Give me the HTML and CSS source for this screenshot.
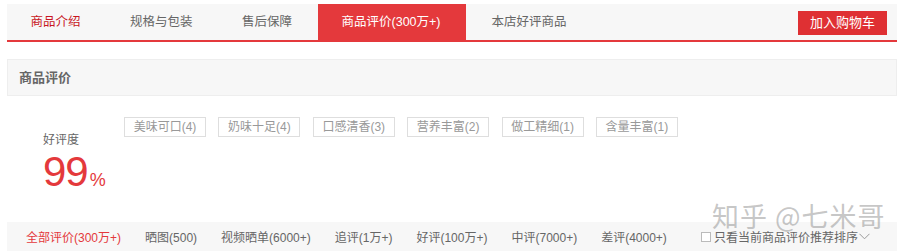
FILE: index.html
```html
<!DOCTYPE html>
<html lang="zh-CN">
<head>
<meta charset="utf-8">
<link rel="stylesheet" href="styles.css">
</head>
<body>
<div class="page">
  <div class="tabbar">
    <div class="tabs">
      <div class="tab tab-first">商品介绍</div>
      <div class="tab">规格与包装</div>
      <div class="tab">售后保障</div>
      <div class="tab tab-active">商品评价(300万+)</div>
      <div class="tab">本店好评商品</div>
    </div>
    <div class="cart-btn">加入购物车</div>
  </div>

  <div class="section-head">商品评价</div>

  <div class="summary">
    <div class="rate">
      <div class="rate-label">好评度</div>
      <div class="rate-value">99<span class="pct">%</span></div>
    </div>
    <div class="tags">
      <span class="tag">美味可口(4)</span>
      <span class="tag">奶味十足(4)</span>
      <span class="tag">口感清香(3)</span>
      <span class="tag">营养丰富(2)</span>
      <span class="tag">做工精细(1)</span>
      <span class="tag">含量丰富(1)</span>
    </div>
  </div>

  <div class="filter">
    <span class="f-item f-active">全部评价(300万+)</span>
    <span class="f-item">晒图(500)</span>
    <span class="f-item">视频晒单(6000+)</span>
    <span class="f-item">追评(1万+)</span>
    <span class="f-item">好评(100万+)</span>
    <span class="f-item">中评(7000+)</span>
    <span class="f-item">差评(4000+)</span>
    <span class="f-check"><span class="box"></span>只看当前商品评价<span class="sort">推荐排序<svg class="chev" width="11" height="7" viewBox="0 0 11 7"><path d="M0.5 0.8 L5.5 5.8 L10.5 0.8" fill="none" stroke="#999" stroke-width="1"/></svg></span></span>
  </div>

  <div class="watermark">知乎 @七米哥</div>
</div>
</body>
</html>
```

FILE: styles.css
```css
* { box-sizing: border-box; }
html, body { margin: 0; padding: 0; background: #fff; }
body {
  font-family: "Liberation Sans", "Noto Sans CJK SC", sans-serif;
  color: #666;
  width: 908px;
  height: 252px;
  overflow: hidden;
}
.page {
  position: relative;
  padding-top: 4px;
  margin-left: 7px;
  width: 890px;
}
.tabbar {
  display: flex;
  justify-content: space-between;
  align-items: flex-start;
  height: 38px;
  background: #f7f7f7;
  border-bottom: 2px solid #e4393c;
}
.tabs {
  display: flex;
  gap: 2.5px;
  height: 36px;
}
.tab {
  height: 36px;
  line-height: 36px;
  padding: 0 23.5px;
  font-size: 12.5px;
  color: #666;
  white-space: nowrap;
}
.tab-first { color: #c81623; }
.tab-active { background: #e4393c; color: #fff; padding-right: 25px; }
.cart-btn {
  margin-top: 7px;
  margin-right: 10px;
  width: 89px;
  height: 24px;
  line-height: 24px;
  text-align: center;
  background: #df3033;
  color: #fff;
  font-size: 13px;
}
.section-head {
  margin-top: 17px;
  height: 37px;
  line-height: 35px;
  background: #f7f7f7;
  border: 1px solid #eee;
  padding-left: 11px;
  font-size: 13px;
  font-weight: bold;
  color: #666;
}
.summary {
  display: flex;
  height: 126px;
}
.rate {
  padding-left: 36px;
  padding-top: 36px;
  width: 117px;
}
.rate-label {
  font-size: 12px;
  line-height: 16px;
  color: #666;
}
.rate-value {
  margin-top: 4px;
  font-size: 42px;
  line-height: 40px;
  color: #e4393c;
  letter-spacing: -1px;
}
.pct { font-size: 18px; letter-spacing: 0; margin-left: 2px; }
.tags {
  display: flex;
  gap: 12.4px;
  padding-top: 21px;
  align-items: flex-start;
}
.tag {
  width: 82px;
  height: 20px;
  line-height: 18px;
  border: 1px solid #dedede;
  text-align: center;
  font-size: 12px;
  color: #999;
  white-space: nowrap;
}
.filter {
  display: flex;
  align-items: center;
  height: 29px;
  background: #f7f7f7;
  padding-left: 19px;
  font-size: 12px;
  color: #666;
}
.f-item { margin-right: 24px; white-space: nowrap; }
.f-active { color: #e4393c; }
.f-check {
  display: flex;
  align-items: center;
  margin-left: 10px;
  white-space: nowrap;
}
.box {
  width: 10px;
  height: 10px;
  border: 1px solid #bbb;
  background: #fff;
  margin-right: 3px;
}
.sort { display: inline-flex; align-items: center; }
.chev { margin-left: 1px; }
.watermark {
  position: absolute;
  left: 705px;
  top: 199px;
  font-family: "Noto Sans CJK SC", sans-serif;
  font-size: 27px;
  line-height: 34px;
  color: rgba(150,150,150,0.55);
  letter-spacing: 1px;
  white-space: nowrap;
}
```
